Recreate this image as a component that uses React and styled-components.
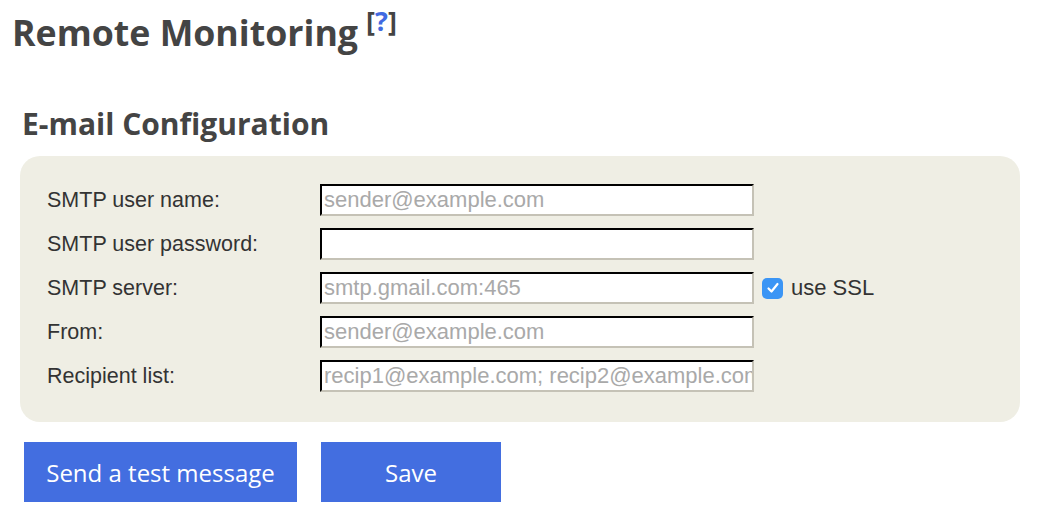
import React from 'react';
import styled, { createGlobalStyle } from 'styled-components';

const GlobalStyle = createGlobalStyle`
  body {
    margin: 0;
    background: #ffffff;
    font-family: "Liberation Sans", Arial, sans-serif;
  }
`;

const Page = styled.div`
  padding: 8px 0 0 12px;
`;

const Title = styled.h1`
  margin: 0;
  height: 48px;
  font-family: "Open Sans", sans-serif;
  font-weight: 700;
  font-size: 35.7px;
  line-height: 48px;
  color: #444444;
`;

const Help = styled.sup`
  font-size: 27px;
  margin-left: 8px;
  color: #444444;
  vertical-align: 15px;
  line-height: 0;

  span {
    color: #4169e1;
  }
`;

const Section = styled.section`
  margin: 48px 0 0 8px;
`;

const SubTitle = styled.h2`
  margin: 0 0 12px 2px;
  font-family: "Open Sans", sans-serif;
  font-weight: 700;
  font-size: 30px;
  line-height: 40px;
  color: #444444;
`;

const Panel = styled.div`
  width: 1000px;
  box-sizing: border-box;
  background: #efeee4;
  border-radius: 20px;
  padding: 28px 0 30px 27px;
  display: grid;
  grid-template-columns: 273px 434px auto;
  row-gap: 12px;
  align-items: center;
`;

const Label = styled.label`
  font-size: 21.5px;
  color: #333333;
`;

const Field = styled.input`
  box-sizing: border-box;
  width: 434px;
  height: 32px;
  margin: 0;
  padding: 0 0 0 2px;
  background: #ffffff;
  border-top: 2px solid #000000;
  border-left: 2px solid #000000;
  border-bottom: 2px solid #c5c2b6;
  border-right: 2px solid #c5c2b6;
  font-family: "Liberation Sans", Arial, sans-serif;
  font-size: 22px;
  color: #333333;
  outline: none;

  &::placeholder {
    color: #a9a9a9;
  }
`;

const Extra = styled.div`
  display: flex;
  align-items: center;
  gap: 8px;
  padding-left: 8px;
  font-size: 22px;
  color: #333333;
`;

const Check = styled.span`
  width: 21px;
  height: 21px;
  border-radius: 5px;
  background: #3b95f5;
  display: flex;
  align-items: center;
  justify-content: center;
`;

const Buttons = styled.div`
  display: flex;
  gap: 24px;
  margin: 20px 0 0 4px;
`;

const Button = styled.button`
  height: 60px;
  width: ${p => p.$width}px;
  border: 0;
  background: #436ee0;
  color: #ffffff;
  font-family: "Open Sans", sans-serif;
  font-size: 24px;
  padding: 0;
  cursor: pointer;
`;

const rows = [
  { label: 'SMTP user name:', placeholder: 'sender@example.com' },
  { label: 'SMTP user password:', placeholder: '', type: 'password' },
  { label: 'SMTP server:', placeholder: 'smtp.gmail.com:465', ssl: true },
  { label: 'From:', placeholder: 'sender@example.com' },
  { label: 'Recipient list:', placeholder: 'recip1@example.com; recip2@example.com' },
];

export default function App() {
  return (
    <Page>
      <GlobalStyle />
      <Title>
        Remote Monitoring<Help>[<span>?</span>]</Help>
      </Title>
      <Section>
        <SubTitle>E-mail Configuration</SubTitle>
        <Panel>
          {rows.map(r => (
            <React.Fragment key={r.label}>
              <Label>{r.label}</Label>
              <Field type={r.type || 'text'} placeholder={r.placeholder} />
              {r.ssl ? (
                <Extra>
                  <Check>
                    <svg width="14" height="14" viewBox="0 0 14 14">
                      <path d="M2.5 7.5 L5.5 10.5 L11.5 3" fill="none" stroke="#fff" strokeWidth="2.2" strokeLinecap="round" strokeLinejoin="round" />
                    </svg>
                  </Check>
                  use SSL
                </Extra>
              ) : (
                <div />
              )}
            </React.Fragment>
          ))}
        </Panel>
        <Buttons>
          <Button $width={273}>Send a test message</Button>
          <Button $width={180}>Save</Button>
        </Buttons>
      </Section>
    </Page>
  );
}
